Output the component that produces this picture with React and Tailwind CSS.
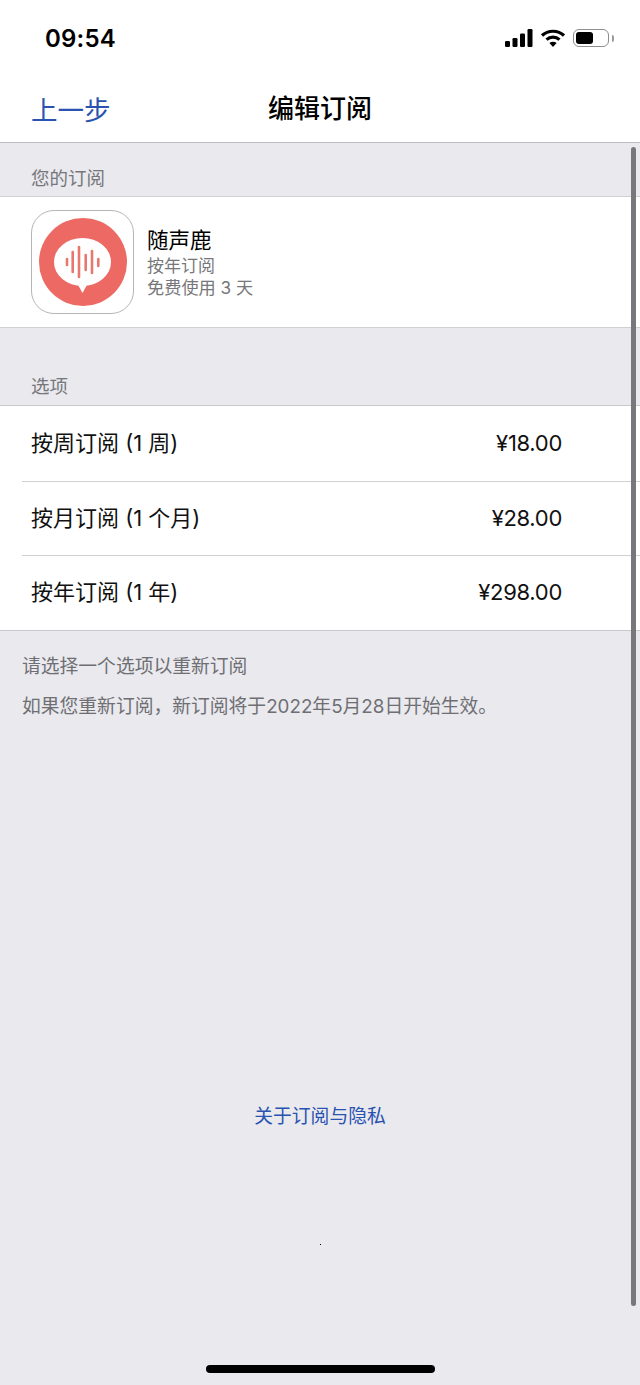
const CJK = "font-['Inter','Noto_Sans_CJK_SC',sans-serif]"

const OPTIONS = [
  { label: '按周订阅 (1 周)', price: '¥18.00', h: 'h-[76px]' },
  { label: '按月订阅 (1 个月)', price: '¥28.00', h: 'h-[74px]' },
  { label: '按年订阅 (1 年)', price: '¥298.00', h: 'h-[74px] pb-[2px]' },
]

function StatusIcons() {
  return (
    <div className="flex items-center">
      <svg width="30" height="20" viewBox="0 0 30 20" fill="#000">
        <rect x="1" y="13" width="5" height="6" rx="1.2" />
        <rect x="8.500" y="10" width="5" height="9" rx="1.2" />
        <rect x="16" y="5.500" width="5" height="13.500" rx="1.2" />
        <rect x="23.500" y="1" width="5" height="18" rx="1.2" />
      </svg>
      <svg className="ml-[6px]" width="26" height="20" viewBox="0 0 26 20" fill="none" stroke="#000" strokeWidth="3.2">
        <path d="M2 7.500C8 1.800 18 1.800 24 7.500" />
        <path d="M6.500 11.600C10.300 8.200 15.700 8.200 19.500 11.600" />
        <path d="M13 19l-3.600-4c2-1.700 5.200-1.700 7.200 0z" fill="#000" stroke="none" />
      </svg>
      <div className="ml-[7px] w-[36px] h-[18px] rounded-[6px] border-[1.5px] border-[#8e8e8e] p-[2px]">
        <div className="w-[17px] h-full rounded-[3px] bg-black" />
      </div>
      <div className="ml-[3px] w-[2px] h-[7px] rounded-r-sm bg-[#9a9a9a]" />
    </div>
  )
}

function AppIcon() {
  return (
    <div className="w-[103px] h-[104px] shrink-0 rounded-[23px] border border-[#b5b5b5] bg-white flex items-center justify-center">
      <svg width="88" height="88" viewBox="0 0 88 88">
        <circle cx="44" cy="44" r="44" fill="#ec6a63" />
        <ellipse cx="43.500" cy="44" rx="28.500" ry="24" fill="#fff" />
        <path d="M38 65l5.500 10 5.500-10z" fill="#fff" />
        <g stroke="#e87770" strokeWidth="2.600" strokeLinecap="round">
          <path d="M28 41v6" />
          <path d="M33.700 34v20" />
          <path d="M40 29v30" />
          <path d="M46.700 37v15" />
          <path d="M53 33v22" />
          <path d="M59.300 41v7" />
        </g>
      </svg>
    </div>
  )
}

export default function App() {
  return (
    <div className={`relative w-[640px] h-[1385px] overflow-hidden bg-[#e9e9ee] ${CJK}`}>
      {/* Status bar + nav */}
      <header className="bg-white border-b border-[#bdbdc0] h-[143px]">
        <div className="flex items-center justify-between h-[72px] pl-[45px] pr-[26px] pt-[4px]">
          <span className="text-[24px] font-semibold leading-none tracking-[0.2px] text-black pt-[2px]">09:54</span>
          <StatusIcons />
        </div>
        <div className="relative flex items-center justify-center h-[70px] pt-[2px]">
          <span className="absolute left-[31px] top-[19px] text-[26.500px] text-[#2a52b0]">上一步</span>
          <span className="text-[26px] font-medium text-black">编辑订阅</span>
        </div>
      </header>

      <div className="h-[53px] flex items-end pb-[6px] pl-[31px] text-[18.500px] leading-[24px] text-[#77777b]">您的订阅</div>

      {/* Current subscription */}
      <section className="h-[132px] bg-white border-y border-[#d0d0d3] flex items-center pl-[31px] gap-[13px]">
        <AppIcon />
        <div className="flex flex-col">
          <span className="text-[21.500px] leading-[29px] text-black">随声鹿</span>
          <span className="text-[17px] leading-[22px] text-[#77777b]">按年订阅</span>
          <span className="text-[17.200px] leading-[21px] text-[#77777b]">免费使用 3 天</span>
        </div>
      </section>

      <div className="h-[77px] flex items-end pb-[7px] pl-[31px] text-[18.500px] leading-[24px] text-[#77777b]">选项</div>

      {/* Options */}
      <section className="bg-white border-y border-[#c8c8cb] h-[226px]">
        {OPTIONS.map((o, i) => (
          <div key={o.label} className={`${o.h} ml-[22px] pl-[9px] pr-[78px] flex items-center justify-between text-[22px] text-[#111] ${i < 2 ? 'border-b border-[#d0d0d3]' : ''}`}>
            <span>{o.label}</span>
            <span className="tracking-[-0.3px]">{o.price}</span>
          </div>
        ))}
      </section>

      <div className="pl-[22px] pt-[24px] text-[18.800px] leading-[24px] text-[#6f6f73]">
        <p>请选择一个选项以重新订阅</p>
        <p className="mt-[16px]">如果您重新订阅，新订阅将于2022年5月28日开始生效。</p>
      </div>

      <div className="mt-[386px] text-center text-[18.800px] leading-[24px] text-[#2a52b0]">关于订阅与隐私</div>

      {/* Overlays: scroll indicator, stray dot, home indicator */}
      <div className="absolute left-[631px] top-[147px] w-[5px] h-[1159px] rounded-full bg-[#77777c]" />
      <div className="absolute left-[320px] top-[1244px] w-px h-px bg-black" />
      <div className="absolute left-[206px] top-[1365px] w-[229px] h-[8px] rounded-full bg-black" />
    </div>
  )
}
